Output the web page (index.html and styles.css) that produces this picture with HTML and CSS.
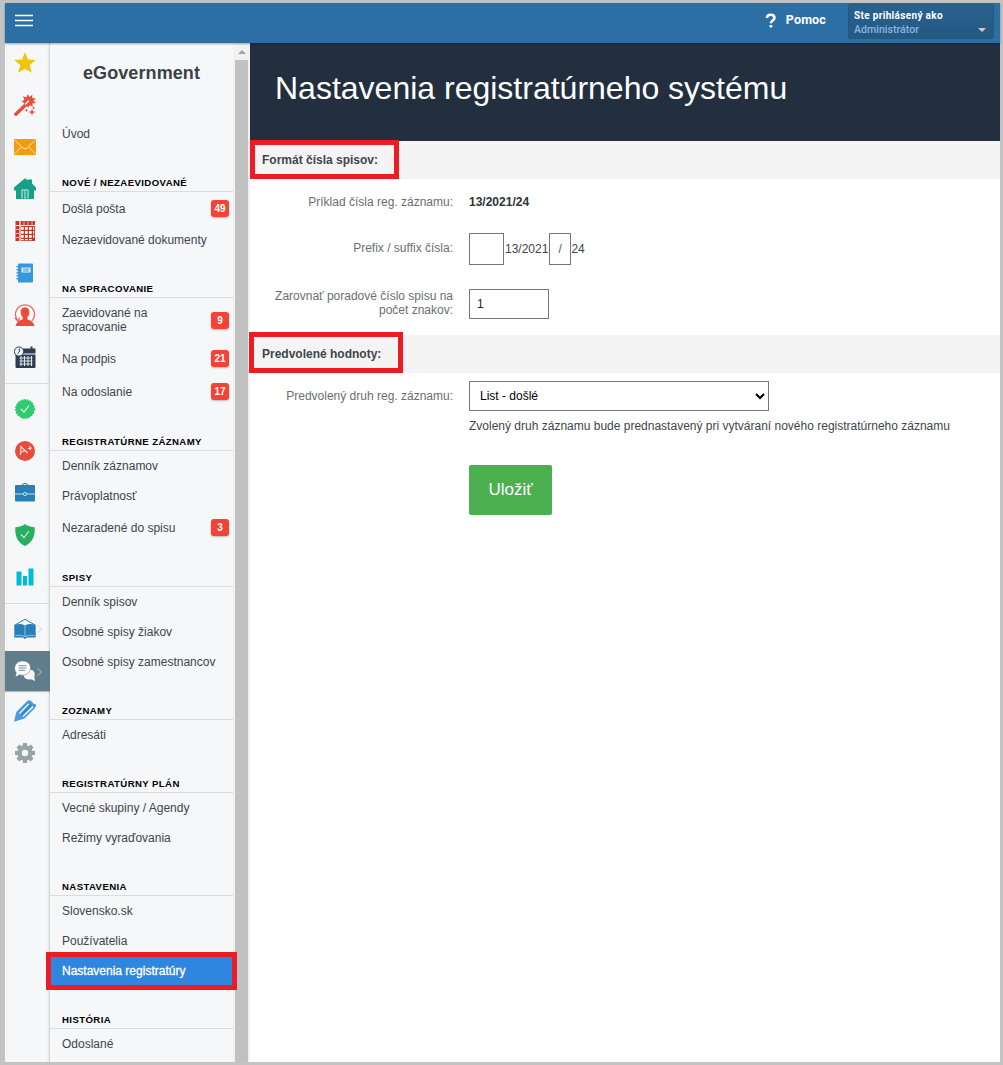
FILE: index.html
```html
<!DOCTYPE html>
<html lang="sk">
<head>
<meta charset="utf-8">
<title>Nastavenia registratúrneho systému</title>
<link rel="stylesheet" href="styles.css">
</head>
<body>
<div class="window">
  <header class="topbar">
    <svg class="burger" width="18" height="14" viewBox="0 0 18 14"><path d="M0 1.5h18M0 6.5h18M0 11.5h18" stroke="#fff" stroke-width="1.7"/></svg>
    <div class="help"><svg width="12" height="16" viewBox="0 0 12 16"><path d="M1.900 4.900C2 2.900 3.600 1.800 5.700 1.800c2.300 0 3.800 1.200 3.800 3 0 2.700-3.600 2.700-3.600 5.400" fill="none" stroke="#fff" stroke-width="2.500"/><rect x="4.500" y="12" width="2.800" height="2.600" rx=".6" fill="#fff"/></svg><span>Pomoc</span></div>
    <div class="account">
      <div class="account-title">Ste prihlásený ako</div>
      <div class="account-name">Administrátor</div>
      <i class="caret"></i>
    </div>
  </header>
  <div class="body">
    <nav class="rail">
      <a class="rail-item"><svg viewBox="0 0 22 22"><path fill="#f1c40f" d="M11 .3l3 7.200 7.800.6-6 5 2 7.700L11 16.700 4.200 20.800l2-7.700-6-5L8 7.500z"/></svg></a>
      <a class="rail-item"><svg viewBox="0 0 22 22"><path d="M1.800 20.200L11.500 11" stroke="#e74c3c" stroke-width="3.400" stroke-linecap="round"/><path fill="#e74c3c" d="M14 0l1.300 2.900L18.300.7l-.2 3.200 3.600.3-2.300 2.500 2.400 2.200-3.500.6.6 3.200-3.300-1.500L14 14l-1.300-3.300-3.500 1.500 1.200-3.300-3-1.400 3-1.500L9 2.300l3.500 1z"/><path d="M11 10.500l4-4" stroke="#f5f7f9" stroke-width="1.500"/><path fill="#e74c3c" d="M18 15l1 2.300 2.500.8-2.500 1L18 21.500l-1-2.400-2.500-1 2.500-.8zM12.500 14.500l.5 1.300 1.300.4-1.300.5-.5 1.200-.5-1.200-1.300-.5 1.300-.4zM19.500 12.500l.6 1 .9.500-.9.400-.6 1-.5-1-1-.4 1-.5z"/></svg></a>
      <a class="rail-item"><svg viewBox="0 0 22 22"><path fill="#f39c12" d="M0 3h22v16H0z"/><path d="M.5 4l8.500 8q2 1.800 4 0l8.500-8M.5 18l6.800-7M21.500 18l-6.800-7" fill="none" stroke="#fbe3bd" stroke-width="1"/></svg></a>
      <a class="rail-item"><svg viewBox="0 0 22 22"><path fill="#16a085" d="M11 .2l3 2V1.500h4v4l4 4v3h-2V21H2v-8.500H0v-3z"/><path d="M8 20.500V12h6v8.500M11 12.500V21" fill="none" stroke="#d5efe9" stroke-width="1"/></svg></a>
      <a class="rail-item"><svg viewBox="0 0 22 22"><path fill="#c0392b" d="M1.500 1H21v20H1.500z"/><path d="M6 1v20M1.500 5.500H21" stroke="#f5f7f9" stroke-width="1.200"/><path d="M10 1v4M14 1v4M18 1v4M1.500 9.500H5M1.500 13.500H5M1.500 17.500H5" stroke="#e9b8b3" stroke-width=".9"/><path fill="#fff" d="M7 7h2.700v2.700H7zm4 0h2.700v2.700H11zm4 0h2.700v2.700H15zM7 11h2.700v2.700H7zm4 0h2.700v2.700H11zm4 0h2.700v2.700H15zM7 15h2.700v2.700H7zm4 0h2.700v2.700H11zm4 0h2.700v2.700H15zM19 7h1.200v2.700H19zm0 4h1.200v2.700H19zm0 4h1.200v2.700H19zM7 19h2.700v1.200H7zm4 0h2.700v1.200H11zm4 0h2.700v1.200H15z"/></svg></a>
      <a class="rail-item"><svg viewBox="0 0 22 22"><rect x="4" y="1.500" width="15" height="19" rx="1" fill="#3498db"/><path d="M4.500 4v15" stroke="#3498db" stroke-width="4" stroke-dasharray="1.500 1.500"/><path fill="#e4f2fb" d="M7.500 5.500h9v5h-9z"/><path d="M9 7h6M9 9h6" stroke="#3498db"/></svg></a>
      <a class="rail-item"><svg viewBox="0 0 22 22"><path fill="#e74c3c" d="M11 3.500c3 0 4.600 2 4.300 5.200-.2 2-1 3.300-1.900 4.200v2.300c1.600 1.200 6 1.700 7 6.800H1.600c1-5.100 5.400-5.600 7-6.800v-2.300c-.9-.9-1.700-2.200-1.900-4.200C6.400 5.500 8 3.500 11 3.500z"/><path d="M4.500 17.500C-2 10.500 3 .8 11 .8s13 9.700 6.500 16.700M1 14l3.500 3.700 1-4.200" fill="none" stroke="#e9604f" stroke-width="1.200"/></svg></a>
      <a class="rail-item"><svg viewBox="0 0 22 22"><path fill="#2c3e50" d="M2 2.500h19.500v5H2zM1.500 8.500h20V21q0 1-1 1h-18q-1 0-1-1zM16.500.5h2v3h-2z"/><path stroke="#dfe5ea" stroke-width="1" d="M5.500 12h13M5.500 15h13M5.500 18h13M7 10v10M10.500 10v10M14 10v10M17.500 10v10" /><circle cx="5" cy="5.500" r="4.600" fill="#f5f7f9" stroke="#2c3e50"/><path d="M5.300 2.500V6L3.500 7.500" fill="none" stroke="#2c3e50"/></svg></a>
      <div class="rail-line"></div>
      <a class="rail-item"><svg viewBox="0 0 22 22"><circle cx="11" cy="11" r="9.300" fill="#2ecc71" stroke="#2ecc71" stroke-width="1.200" stroke-dasharray="2 1"/><path d="M7 11l3 3.200L15 7.500" fill="none" stroke="#e8faef" stroke-width="1.100"/></svg></a>
      <a class="rail-item"><svg viewBox="0 0 22 22"><circle cx="11" cy="11" r="10" fill="#e74c3c"/><path d="M6.500 15l.5-8.500L13.500 13M6 12.500l5-2M14 8.500l4-.5M15.700 6l.7 4" fill="none" stroke="#fbe0dc" stroke-width="1.200"/></svg></a>
      <a class="rail-item"><svg viewBox="0 0 22 22"><path d="M8 3.500q0-2 3-2t3 2" fill="none" stroke="#2980b9"/><rect x="1" y="3" width="20" height="16.500" rx="1" fill="#2980b9"/><path d="M1 12h8M13 12h8" stroke="#c6dcec"/><circle cx="11" cy="12" r="1.600" fill="none" stroke="#c6dcec"/></svg></a>
      <a class="rail-item"><svg viewBox="0 0 22 22"><path fill="#27ae60" d="M11 0c2.500 2.200 6 3 9.700 3.200.4 9-2 15-9.700 18.800C3.300 18.200.9 12.200 1.300 3.200 5 3 8.500 2.200 11 0z"/><path d="M7 10.500l3 3.200L15 7" fill="none" stroke="#d4efdf" stroke-width="1.100"/></svg></a>
      <a class="rail-item"><svg viewBox="0 0 22 22"><path fill="#00bcd4" d="M2.500 5.500h5v14h-5zM9 10h4v9.500H9zM14.500 2.500h5v17h-5z"/></svg></a>
      <div class="rail-line"></div>
      <a class="rail-item"><svg viewBox="0 0 22 22"><path d="M1 7L11 1.200 21 7" fill="none" stroke="#2980b9"/><path fill="#2980b9" d="M.3 7q6-2 10.700.5Q15.700 5 21.700 7v12.500H13L11 21l-2-1.500H.3z"/><path d="M11 7.500v11M1.500 17.500q5-1 9.500 1 4.500-2 9.500-1" fill="none" stroke="#9fc6e0" stroke-width=".9"/></svg><svg class="chev" viewBox="0 0 5 8"><path d="M.5.5l4 3.500-4 3.500" fill="none" stroke="#cfd4d8"/></svg></a>
      <a class="rail-item active"><svg viewBox="0 0 22 22"><path fill="#f4f6f7" d="M14 10c5-1.500 8 2.500 6.300 6.200L21 21l-3.500-1.800c-4 1-7.500-.7-8-4z"/><path fill="#fff" stroke="#607d8b" stroke-width=".5" d="M8.500 1c5 0 8 3 8 7s-3 7.200-8 7.200q-1.500 0-3-.5L1.500 17l.8-4.300C-1.500 7.500 2 1 8.500 1z"/><path d="M4.500 5.700h8M4.500 8h8M4.500 10.300H11" stroke="#607d8b" stroke-width=".9"/></svg><svg class="chev" viewBox="0 0 5 8"><path d="M.5.5l4 3.500-4 3.500" fill="none" stroke="#b4c1c7"/></svg></a>
      <a class="rail-item pen"><svg viewBox="0 0 22 22"><path fill="#4a9be0" d="M0 21.800L2.300 12 13 1.200Q14 0 16 .5l1.500.8L20 4l1.800-.2q.6 2.500-.8 4.200L10.500 18.500z"/><path fill="#e6f2fc" d="M5 13L14 3.500l1 1L6 14zM8.500 16L18.500 6l1 1.200L9.500 17z"/><path d="M7 15L17.300 4.700" stroke="#2d7cc7" stroke-width="1.300"/></svg></a>
      <a class="rail-item"><svg viewBox="0 0 22 22"><circle cx="11" cy="11" r="5.500" fill="none" stroke="#95a5a6" stroke-width="4.600"/><path stroke="#95a5a6" stroke-width="4.200" d="M11 1v4M11 17v4M1 11h4M17 11h4M3.900 3.900l2.800 2.800M15.300 15.300l2.800 2.800M3.900 18.100l2.800-2.800M15.300 6.700l2.800-2.800"/></svg></a>
    </nav>
    <aside class="menu">
      <h2>eGovernment</h2>
      <a>Úvod</a>
      <h3>NOVÉ / NEZAEVIDOVANÉ</h3>
      <a class="counted">Došlá pošta<b>49</b></a>
      <a>Nezaevidované dokumenty</a>
      <h3>NA SPRACOVANIE</h3>
      <a class="counted double"><span>Zaevidované na<br>spracovanie</span><b>9</b></a>
      <a class="counted">Na podpis<b>21</b></a>
      <a class="counted">Na odoslanie<b>17</b></a>
      <h3>REGISTRATÚRNE ZÁZNAMY</h3>
      <a>Denník záznamov</a>
      <a>Právoplatnosť</a>
      <a class="counted">Nezaradené do spisu<b>3</b></a>
      <h3>SPISY</h3>
      <a>Denník spisov</a>
      <a>Osobné spisy žiakov</a>
      <a>Osobné spisy zamestnancov</a>
      <h3>ZOZNAMY</h3>
      <a>Adresáti</a>
      <h3>REGISTRATÚRNY PLÁN</h3>
      <a>Vecné skupiny / Agendy</a>
      <a>Režimy vyraďovania</a>
      <h3>NASTAVENIA</h3>
      <a>Slovensko.sk</a>
      <a>Používatelia</a>
      <a class="selected">Nastavenia registratúry</a>
      <h3>HISTÓRIA</h3>
      <a>Odoslané</a>
    </aside>
    <div class="scrollbar"><i class="arrow-up"></i><div class="thumb"></div></div>
    <main>
      <h1>Nastavenia registratúrneho systému</h1>
      <div class="section first">Formát čísla spisov:</div>
      <div class="row example"><label>Príklad čísla reg. záznamu:</label><strong>13/2021/24</strong></div>
      <div class="row affix"><label>Prefix / suffix čísla:</label><input class="prefix"><span>13/2021</span><input class="suffix" value="/"><span>24</span></div>
      <div class="row align"><label>Zarovnať poradové číslo spisu na počet znakov:</label><input class="digits" value="1"></div>
      <div class="section second">Predvolené hodnoty:</div>
      <div class="row kind"><label>Predvolený druh reg. záznamu:</label><select><option>List - došlé</option></select></div>
      <p class="note">Zvolený druh záznamu bude prednastavený pri vytváraní nového registratúrneho záznamu</p>
      <button>Uložiť</button>
    </main>
  </div>
</div>
</body>
</html>
```
FILE: styles.css
```css
*, *::before { box-sizing: border-box; }
body {
  margin: 0;
  background: #c3c3c3;
  font: 12px/14px "Liberation Sans", Arial, sans-serif;
  color: #3f454b;
}
.window {
  display: flex;
  flex-direction: column;
  height: 1065px;
  padding: 3px 3px 3px 5px;
  overflow: hidden;
}
.topbar {
  display: flex;
  flex: 0 0 40px;
  padding: 0 6px 0 10px;
  background: #2c6fa4;
  box-shadow: 0 1px 2px rgba(0, 0, 0, .35);
  position: relative;
  z-index: 1;
}
.burger { margin-top: 11px; }
.help {
  display: flex;
  gap: 9px;
  margin: 10px 22px 0 auto;
  font: bold 12.5px/14px Roboto, sans-serif;
  letter-spacing: .15px;
  color: #fff;
}
.account {
  position: relative;
  width: 146px;
  height: 35px;
  margin-top: 1px;
  padding: 4px 5px;
  border: 1px solid #25587f;
  border-radius: 2px;
  background: linear-gradient(#2a618e, #225a84);
  font: 10px/14px Roboto, sans-serif;
}
.account-title {
  font-weight: bold;
  letter-spacing: .33px;
  line-height: 13px;
  white-space: nowrap;
  color: #fff;
}
.account-name { font-size: 10.6px; font-weight: 500; color: #8ab4e2; line-height: 15px; }
.caret {
  position: absolute;
  right: 7px;
  bottom: 6px;
  border: 4px solid transparent;
  border-top-color: #c6cdd3;
  border-bottom: 0;
}
.body { display: flex; flex: 1; min-height: 0; background: #fff; }
.rail {
  flex: 0 0 45px;
  min-width: 0;
  background: #f5f7f9;
  border-right: 1px solid #d5d8db;
  box-shadow: inset -2px 0 2px -1px rgba(0, 0, 0, .08);
}
.rail-item {
  position: relative;
  display: flex;
  align-items: center;
  height: 42px;
  padding-left: 9px;
}
.rail-item:first-child { margin-top: -1px; }
.rail-item svg { width: 22px; height: 22px; }
.rail-item .chev { position: absolute; left: 32px; top: 17px; width: 5px; height: 8px; }
.rail-line { height: 1px; margin: 5px 0 4px; background: #d9dcdf; }
.rail .active {
  height: 40px;
  margin: 1px -1px 0 0;
  background: #607d8b;
  box-shadow: 0 1px 1px rgba(0, 0, 0, .25);
}
.rail .pen { height: 40px; margin-bottom: 1px; }
.menu {
  flex: 0 0 183px;
  min-width: 0;
  position: relative;
  background: #f5f7f9;
}
.menu h2 {
  height: 76px;
  margin: 0;
  padding-top: 19px;
  font-size: 18px;
  line-height: 22px;
  letter-spacing: .1px;
  text-align: center;
  color: #3a4148;
}
.menu h3 {
  height: 43px;
  margin: 0;
  padding: 27px 0 0 12px;
  border-bottom: 1px solid #d9dce0;
  font-size: 9.6px;
  line-height: 14px;
  letter-spacing: .4px;
  color: #000;
}
.menu a {
  display: flex;
  align-items: center;
  justify-content: space-between;
  height: 30px;
  padding: 0 4px 0 12px;
}
.menu .counted { height: 33px; }
.menu .double { height: 44px; }
.menu b {
  width: 18px;
  height: 17px;
  border-radius: 3px;
  background: #f44336;
  box-shadow: 0 1px 2px rgba(0, 0, 0, .25);
  font: bold 10px/17px "Liberation Sans", Arial, sans-serif;
  text-align: center;
  color: #fff;
}
.menu .selected {
  position: relative;
  width: 191px;
  height: 38px;
  margin: -4px 0 -4px -4px;
  padding-left: 11px;
  border: 5px solid #ed1c24;
  background: #2f86df;
  color: #fff;
  -webkit-text-stroke: .3px #fff;
}
.scrollbar { flex: 0 0 17px; padding: 4px 2px 0; background: #f1f1f1; }
.arrow-up {
  display: block;
  width: 0;
  margin: 3px auto 6px;
  border: 4px solid transparent;
  border-bottom-color: #a3a3a3;
  border-top: 0;
}
.thumb { height: 1002px; background: #c1c1c1; }
main { flex: 1; min-width: 0; background: #fff; }
h1 {
  height: 98px;
  margin: 0;
  padding: 0 25px;
  background: #232f3e;
  color: #fff;
  font-size: 32px;
  font-weight: normal;
  line-height: 90px;
}
.section {
  position: relative;
  height: 38px;
  padding-left: 12px;
  background: #f4f4f4;
  font-weight: bold;
  line-height: 38px;
}
.section::before {
  content: "";
  position: absolute;
  left: 0;
  top: -1px;
  width: 149px;
  height: 39px;
  border: 5px solid #ed1c24;
}
.second::before { left: -1px; top: -3px; width: 154px; height: 41px; }
.row { display: flex; align-items: center; }
label { width: 203px; margin-right: 16px; padding-left: 20px; text-align: right; color: #6a6e73; }
.example { height: 46px; }
.example strong { color: #2f3439; }
.affix { height: 48px; }
.affix label { padding-bottom: 2px; }
.align { height: 62px; }
.align label { padding-bottom: 2px; }
input {
  height: 30px;
  border: 1px solid #767676;
  padding: 0 7px;
  font: 12px "Liberation Sans", Arial, sans-serif;
  color: #3b0a45;
}
.prefix { width: 35px; height: 32px; margin-right: 1px; }
.suffix { width: 22px; height: 32px; margin-left: 1px; padding: 0 8px; color: #555; }
.digits { width: 80px; }
.kind { height: 46px; }
select {
  width: 300px;
  height: 30px;
  padding: 0 0 0 6px;
  border: 1px solid #767676;
  border-radius: 0;
  background: #fff;
  font: 12px "Liberation Sans", Arial, sans-serif;
  color: #000;
}
.note { margin: 0 0 32px 219px; white-space: nowrap; }
button {
  width: 83px;
  height: 50px;
  margin-left: 219px;
  border: 0;
  border-radius: 2px;
  background: #4caf50;
  color: #fff;
  font: 17px "Liberation Sans", Arial, sans-serif;
}
```
